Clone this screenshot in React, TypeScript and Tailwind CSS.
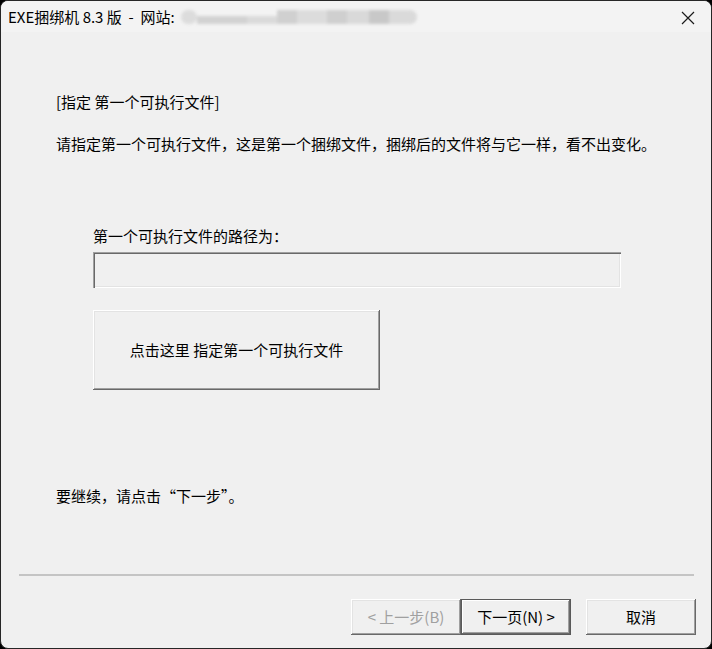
const font = "font-['Noto_Sans_CJK_SC','Microsoft_YaHei',sans-serif]";

const raised =
  "shadow-[inset_-1px_-1px_#696969,inset_1px_1px_#ffffff,inset_-2px_-2px_#a0a0a0,inset_2px_2px_#e3e3e3]";

function Blurred() {
  return (
    <div className="flex items-center h-[18px] ml-[6px] blur-[1.5px]">
      <div className="w-[16px] h-[14px] rounded-full bg-[#dcdcdc]" />
      <div className="w-[50px] h-[8px] mt-[6px] bg-[#d2d2d2]" />
      <div className="w-[30px] h-[8px] mt-[6px] bg-[#dadada]" />
      <div className="w-[20px] h-[14px] bg-[#d0d0d0]" />
      <div className="w-[30px] h-[14px] bg-[#dcdcdc]" />
      <div className="w-[20px] h-[14px] bg-[#cfcfcf]" />
      <div className="w-[22px] h-[14px] bg-[#d9d9d9]" />
      <div className="w-[20px] h-[14px] bg-[#c8c8c8]" />
      <div className="w-[28px] h-[14px] rounded-r-full bg-[#dadada]" />
    </div>
  );
}

export default function App() {
  return (
    <div className={`w-[712px] h-[649px] bg-black ${font} text-black`}>
      <div className="w-full h-full rounded-[8px] border border-[#262626] bg-[#f0f0f0] overflow-hidden flex flex-col">
        {/* title bar */}
        <div className="h-[31px] bg-[#f3f3f3] flex items-center pl-[7px] pr-[16px] shrink-0">
          <span className="text-[15px] leading-none whitespace-pre">EXE捆绑机 8.3 版  -  网站:</span>
          <Blurred />
          <div className="flex-1" />
          <svg width="14" height="14" viewBox="0 0 14 14" className="mt-[2px]">
            <path d="M1 1 L13 13 M13 1 L1 13" stroke="#1a1a1a" strokeWidth="1.2" />
          </svg>
        </div>

        {/* body */}
        <div className="flex flex-col flex-1 text-[15px] leading-[20px]">
          <p className="ml-[55px] mt-[60px]">[指定 第一个可执行文件]</p>
          <p className="ml-[55px] mt-[22px]">
            请指定第一个可执行文件，这是第一个捆绑文件，捆绑后的文件将与它一样，看不出变化。
          </p>

          <div className="ml-[92px] mt-[72px] flex flex-col">
            <p>第一个可执行文件的路径为：</p>
            <div className="mt-[6px] w-[528px] h-[36px] bg-[#f0f0f0] shadow-[inset_1px_1px_#a0a0a0,inset_2px_2px_#696969,inset_-1px_-1px_#ffffff,inset_-2px_-2px_#e3e3e3]" />
            <button
              className={`mt-[22px] w-[287px] h-[80px] bg-[#f0f0f0] text-[15px] ${raised}`}
            >
              点击这里 指定第一个可执行文件
            </button>
          </div>

          <p className="ml-[55px] mt-[96px]">要继续，请点击“下一步”。</p>

          <div className="ml-[18px] mt-[68px] w-[675px] h-[2px] bg-[#c4c4c4]" />

          <div className="flex mt-[23px] ml-[350px]">
            <button className={`w-[110px] h-[36px] text-[#a0a0a0] bg-[#f0f0f0] ${raised}`}>
              &lt; 上一步(B)
            </button>
            <button className="w-[110px] h-[36px] bg-[#f0f0f0] border border-[#5a5a5a] shadow-[inset_-1px_-1px_#696969,inset_1px_1px_#ffffff,inset_-2px_-2px_#a0a0a0]">
              下一页(N) &gt;
            </button>
            <button className={`ml-[15px] w-[110px] h-[36px] bg-[#f0f0f0] ${raised}`}>
              取消
            </button>
          </div>
        </div>
      </div>
    </div>
  );
}
